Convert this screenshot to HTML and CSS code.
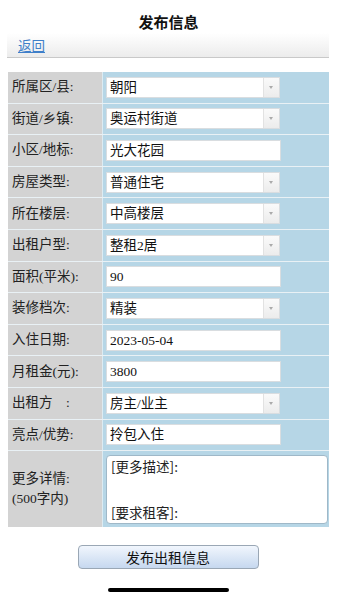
FILE: index.html
```html
<!DOCTYPE html>
<html lang="zh">
<head>
<meta charset="utf-8">
<link rel="stylesheet" href="styles.css">
</head>
<body>
<div class="page">
  <h1 class="title">发布信息</h1>
  <div class="nav"><a class="back" href="#">返回</a></div>
  <div class="form">
    <div class="row"><div class="lab">所属区/县:</div><div class="val"><div class="sel"><span class="sel-text">朝阳</span><span class="arrow"></span></div></div></div>
    <div class="row"><div class="lab">街道/乡镇:</div><div class="val"><div class="sel"><span class="sel-text">奥运村街道</span><span class="arrow"></span></div></div></div>
    <div class="row"><div class="lab">小区/地标:</div><div class="val"><div class="inp">光大花园</div></div></div>
    <div class="row"><div class="lab">房屋类型:</div><div class="val"><div class="sel"><span class="sel-text">普通住宅</span><span class="arrow"></span></div></div></div>
    <div class="row"><div class="lab">所在楼层:</div><div class="val"><div class="sel"><span class="sel-text">中高楼层</span><span class="arrow"></span></div></div></div>
    <div class="row"><div class="lab">出租户型:</div><div class="val"><div class="sel"><span class="sel-text">整租2居</span><span class="arrow"></span></div></div></div>
    <div class="row"><div class="lab">面积(平米):</div><div class="val"><div class="inp">90</div></div></div>
    <div class="row"><div class="lab">装修档次:</div><div class="val"><div class="sel"><span class="sel-text">精装</span><span class="arrow"></span></div></div></div>
    <div class="row"><div class="lab">入住日期:</div><div class="val"><div class="inp">2023-05-04</div></div></div>
    <div class="row"><div class="lab">月租金(元):</div><div class="val"><div class="inp">3800</div></div></div>
    <div class="row"><div class="lab">出租方&nbsp;&nbsp;&nbsp;&nbsp;:</div><div class="val"><div class="sel"><span class="sel-text">房主/业主</span><span class="arrow"></span></div></div></div>
    <div class="row"><div class="lab">亮点/优势:</div><div class="val"><div class="inp">拎包入住</div></div></div>
    <div class="row row-tall"><div class="lab">更多详情:<br>(500字内)</div><div class="val"><div class="area"><div>[更多描述]:</div><div class="gap"></div><div>[要求租客]:</div></div></div></div>
  </div>
  <div class="btn-wrap"><button class="btn">发布出租信息</button></div>
  <div class="home"></div>
</div>
</body>
</html>
```

FILE: styles.css
```css
html, body {
  margin: 0;
  padding: 0;
  background: #ffffff;
}
.page {
  width: 337px;
  height: 600px;
  font-family: "Liberation Serif", "Noto Sans CJK SC", serif;
  color: #111;
  position: relative;
}
.title {
  margin: 0;
  height: 33px;
  box-sizing: border-box;
  padding-top: 12px;
  text-align: center;
  font-family: "Noto Sans CJK SC", sans-serif;
  font-size: 15px;
  line-height: 20px;
  font-weight: bold;
  color: #111;
}
.nav {
  margin: 0 8px 0 7px;
  height: 24px;
  border-bottom: 1px solid #c9c9c9;
  background: linear-gradient(#ffffff, #ececec);
  display: flex;
  align-items: center;
  padding-left: 11px;
}
.back {
  font-family: "Noto Sans CJK SC", sans-serif;
  font-size: 13.5px;
  color: #3f7fc9;
  text-decoration: underline;
  line-height: 18px;
}
.form {
  margin: 14px 8px 0 8px;
  width: 321px;
}
.row {
  display: grid;
  grid-template-columns: 94px 1fr;
  height: 31.6px;
  box-sizing: border-box;
  border-bottom: 1px solid #e9f1f5;
}
.row-tall {
  height: 76px;
  border-bottom: none;
}
.lab {
  background: #d3d3d3;
  padding-left: 4px;
  display: flex;
  align-items: center;
  font-size: 13.5px;
  color: #222;
  line-height: 20px;
}
.val {
  background: #b6d6e6;
  padding-left: 3px;
  display: flex;
  align-items: center;
  border-left: 1px solid #dcebf2;
}
.sel {
  width: 174px;
  height: 21px;
  box-sizing: border-box;
  border: 1px solid #d9dde0;
  background: #fff;
  display: flex;
  align-items: stretch;
}
.sel-text {
  flex: 1;
  padding-left: 3px;
  font-size: 13.5px;
  line-height: 19px;
}
.arrow {
  width: 15px;
  border-left: 1px solid #e2e2e2;
  background: linear-gradient(#fafafa, #ececec);
  position: relative;
}
.arrow::after {
  content: "";
  position: absolute;
  left: 5px;
  top: 8px;
  border-left: 2.5px solid transparent;
  border-right: 2.5px solid transparent;
  border-top: 3px solid #aaa;
}
.inp {
  width: 175px;
  height: 21px;
  box-sizing: border-box;
  border: 1px solid #d9dde0;
  background: #fff;
  padding-left: 3px;
  font-size: 13.5px;
  line-height: 19px;
}
.area {
  width: 222px;
  height: 69px;
  box-sizing: border-box;
  border: 1px solid #9fb8c8;
  border-radius: 4px;
  background: #fff;
  padding: 3px 0 0 4px;
  font-size: 13.5px;
  line-height: 15.3px;
  font-family: "Noto Sans CJK SC", sans-serif;
  color: #222;
}
.gap {
  height: 30.6px;
}
.btn-wrap {
  display: flex;
  justify-content: center;
  margin-top: 18px;
  padding-right: 0;
}
.btn {
  width: 181px;
  height: 24px;
  margin-left: -1px;
  border: 1px solid #9aa7b5;
  border-radius: 4px;
  background: linear-gradient(#f1f6fd, #c6d8ef);
  font-family: "Noto Sans CJK SC", sans-serif;
  font-size: 14px;
  color: #111;
  padding: 0;
  line-height: 22px;
}
.home {
  position: absolute;
  left: 108px;
  top: 588px;
  width: 121px;
  height: 4px;
  border-radius: 2px;
  background: #000;
}
```
